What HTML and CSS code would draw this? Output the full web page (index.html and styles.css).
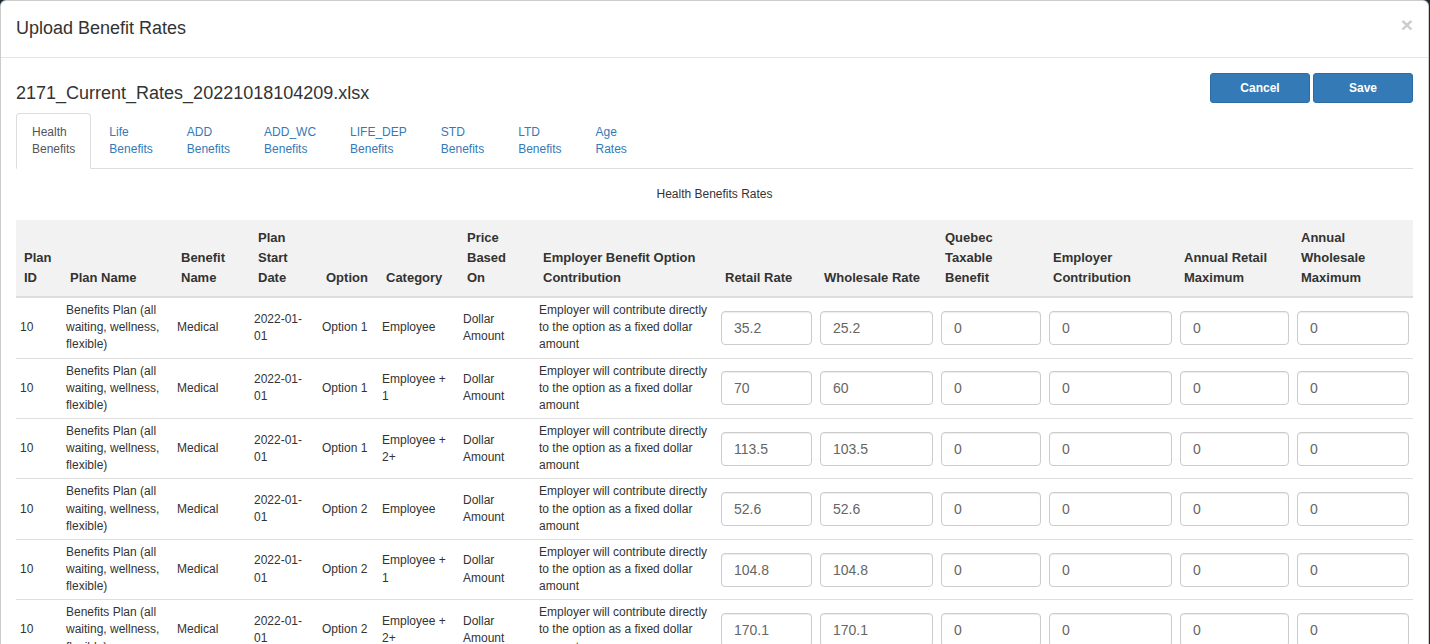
FILE: index.html
```html
<!DOCTYPE html>
<html lang="en">
<head>
<meta charset="utf-8">
<title>Upload Benefit Rates</title>
<link rel="stylesheet" href="styles.css">
</head>
<body>
<div class="modal">
  <div class="modal-header">
    <h4 class="modal-title">Upload Benefit Rates</h4>
    <button class="close" type="button">&times;</button>
  </div>
  <div class="modal-body">
    <div class="toolbar">
      <h4 class="file-name">2171_Current_Rates_20221018104209.xlsx</h4>
      <div class="actions">
        <button class="btn" type="button">Cancel</button>
        <button class="btn" type="button">Save</button>
      </div>
    </div>
    <ul class="tabs">
      <li class="active"><a>Health<br>Benefits</a></li>
      <li><a>Life<br>Benefits</a></li>
      <li><a>ADD<br>Benefits</a></li>
      <li><a>ADD_WC<br>Benefits</a></li>
      <li><a>LIFE_DEP<br>Benefits</a></li>
      <li><a>STD<br>Benefits</a></li>
      <li><a>LTD<br>Benefits</a></li>
      <li><a>Age<br>Rates</a></li>
    </ul>
    <div class="tab-content">
      <p class="caption">Health Benefits Rates</p>
      <table class="rates">
        <colgroup>
          <col class="c-id"><col class="c-name"><col class="c-benefit"><col class="c-date">
          <col class="c-option"><col class="c-category"><col class="c-price"><col class="c-contrib">
          <col class="c-retail"><col class="c-wholesale"><col class="c-quebec"><col class="c-employer">
          <col class="c-aretail"><col class="c-awholesale">
        </colgroup>
        <thead>
          <tr>
            <th>Plan ID</th>
            <th>Plan Name</th>
            <th>Benefit Name</th>
            <th>Plan Start Date</th>
            <th>Option</th>
            <th>Category</th>
            <th>Price Based On</th>
            <th>Employer Benefit Option Contribution</th>
            <th>Retail Rate</th>
            <th>Wholesale Rate</th>
            <th>Quebec Taxable Benefit</th>
            <th>Employer Contribution</th>
            <th>Annual Retail Maximum</th>
            <th>Annual Wholesale Maximum</th>
          </tr>
        </thead>
        <tbody>
          <tr>
            <td>10</td><td>Benefits Plan (all waiting, wellness, flexible)</td><td>Medical</td><td>2022-01-01</td>
            <td>Option 1</td><td>Employee</td><td>Dollar Amount</td><td>Employer will contribute directly to the option as a fixed dollar amount</td>
            <td><input class="field" value="35.2"></td><td><input class="field" value="25.2"></td>
            <td><input class="field" value="0"></td><td><input class="field" value="0"></td>
            <td><input class="field" value="0"></td><td><input class="field" value="0"></td>
          </tr>
          <tr>
            <td>10</td><td>Benefits Plan (all waiting, wellness, flexible)</td><td>Medical</td><td>2022-01-01</td>
            <td>Option 1</td><td>Employee + 1</td><td>Dollar Amount</td><td>Employer will contribute directly to the option as a fixed dollar amount</td>
            <td><input class="field" value="70"></td><td><input class="field" value="60"></td>
            <td><input class="field" value="0"></td><td><input class="field" value="0"></td>
            <td><input class="field" value="0"></td><td><input class="field" value="0"></td>
          </tr>
          <tr>
            <td>10</td><td>Benefits Plan (all waiting, wellness, flexible)</td><td>Medical</td><td>2022-01-01</td>
            <td>Option 1</td><td>Employee + 2+</td><td>Dollar Amount</td><td>Employer will contribute directly to the option as a fixed dollar amount</td>
            <td><input class="field" value="113.5"></td><td><input class="field" value="103.5"></td>
            <td><input class="field" value="0"></td><td><input class="field" value="0"></td>
            <td><input class="field" value="0"></td><td><input class="field" value="0"></td>
          </tr>
          <tr>
            <td>10</td><td>Benefits Plan (all waiting, wellness, flexible)</td><td>Medical</td><td>2022-01-01</td>
            <td>Option 2</td><td>Employee</td><td>Dollar Amount</td><td>Employer will contribute directly to the option as a fixed dollar amount</td>
            <td><input class="field" value="52.6"></td><td><input class="field" value="52.6"></td>
            <td><input class="field" value="0"></td><td><input class="field" value="0"></td>
            <td><input class="field" value="0"></td><td><input class="field" value="0"></td>
          </tr>
          <tr>
            <td>10</td><td>Benefits Plan (all waiting, wellness, flexible)</td><td>Medical</td><td>2022-01-01</td>
            <td>Option 2</td><td>Employee + 1</td><td>Dollar Amount</td><td>Employer will contribute directly to the option as a fixed dollar amount</td>
            <td><input class="field" value="104.8"></td><td><input class="field" value="104.8"></td>
            <td><input class="field" value="0"></td><td><input class="field" value="0"></td>
            <td><input class="field" value="0"></td><td><input class="field" value="0"></td>
          </tr>
          <tr>
            <td>10</td><td>Benefits Plan (all waiting, wellness, flexible)</td><td>Medical</td><td>2022-01-01</td>
            <td>Option 2</td><td>Employee + 2+</td><td>Dollar Amount</td><td>Employer will contribute directly to the option as a fixed dollar amount</td>
            <td><input class="field" value="170.1"></td><td><input class="field" value="170.1"></td>
            <td><input class="field" value="0"></td><td><input class="field" value="0"></td>
            <td><input class="field" value="0"></td><td><input class="field" value="0"></td>
          </tr>
        </tbody>
      </table>
    </div>
  </div>
</div>
</body>
</html>
```

FILE: styles.css
```css
* {
  box-sizing: border-box;
}

html,
body {
  margin: 0;
  height: 100%;
  overflow: hidden;
}

body {
  background: #1e2b33;
  font-family: "Liberation Sans", Arial, Helvetica, sans-serif;
  font-size: 14px;
  line-height: 1.42857;
  color: #333;
}

.modal {
  width: 1429px;
  background: #fff;
  border: 1px solid rgba(0, 0, 0, 0.2);
  border-radius: 6px;
}

.modal-header {
  display: flex;
  justify-content: space-between;
  align-items: flex-start;
  padding: 15px;
  border-bottom: 1px solid #e5e5e5;
}

.modal-title {
  margin: 0;
  font-size: 18px;
  font-weight: 400;
  line-height: 1.42857;
}

.close {
  margin-top: -2px;
  padding: 0;
  border: 0;
  background: none;
  font-family: inherit;
  font-size: 21px;
  font-weight: bold;
  line-height: 1;
  color: #000;
  opacity: 0.2;
}

.modal-body {
  padding: 15px;
}

.toolbar {
  display: flex;
  justify-content: space-between;
  align-items: flex-start;
}

.file-name {
  margin: 10px 0 0;
  font-size: 18px;
  font-weight: 400;
  line-height: 20px;
}

.actions {
  display: flex;
  gap: 3px;
}

.btn {
  width: 100px;
  height: 30px;
  padding: 5px 10px;
  font-family: inherit;
  font-size: 12px;
  font-weight: bold;
  line-height: 1.5;
  color: #fff;
  background: #337ab7;
  border: 1px solid #2e6da4;
  border-radius: 3px;
}

.tabs {
  display: flex;
  list-style: none;
  margin: 10px 0 0;
  padding: 0;
  border-bottom: 1px solid #ddd;
}

.tabs li {
  margin: 0 2px -1px 0;
}

.tabs a {
  display: block;
  padding: 10px 15px;
  font-size: 12px;
  line-height: 1.42857;
  color: #337ab7;
  border: 1px solid transparent;
  border-radius: 4px 4px 0 0;
}

.tabs .active a {
  color: #555;
  background: #fff;
  border-color: #ddd;
  border-bottom-color: transparent;
}

.caption {
  margin: 17px 0 17px;
  text-align: center;
  font-size: 12px;
  line-height: 1.42857;
}

.rates {
  width: 100%;
  border-collapse: collapse;
  table-layout: fixed;
}

.c-id { width: 46px; }
.c-name { width: 111px; }
.c-benefit { width: 77px; }
.c-date { width: 68px; }
.c-option { width: 60px; }
.c-category { width: 81px; }
.c-price { width: 76px; }
.c-contrib { width: 182px; }
.c-retail { width: 99px; }
.c-wholesale { width: 121px; }
.c-quebec { width: 108px; }
.c-employer { width: 131px; }
.c-aretail { width: 117px; }
.c-awholesale { width: 120px; }

.rates th {
  padding: 8px;
  background: #f2f2f2;
  font-size: 13px;
  font-weight: bold;
  line-height: 20px;
  text-align: left;
  vertical-align: bottom;
  border-bottom: 2px solid #ddd;
}

.rates td {
  padding: 4px;
  font-size: 12px;
  line-height: 1.42857;
  vertical-align: middle;
  border-top: 1px solid #ddd;
}

.field {
  display: block;
  width: 100%;
  height: 34px;
  padding: 6px 12px;
  font-family: inherit;
  font-size: 14px;
  line-height: 1.42857;
  color: #666;
  background: #fff;
  border: 1px solid #ccc;
  border-radius: 4px;
  box-shadow: inset 0 1px 1px rgba(0, 0, 0, 0.075);
}
```
